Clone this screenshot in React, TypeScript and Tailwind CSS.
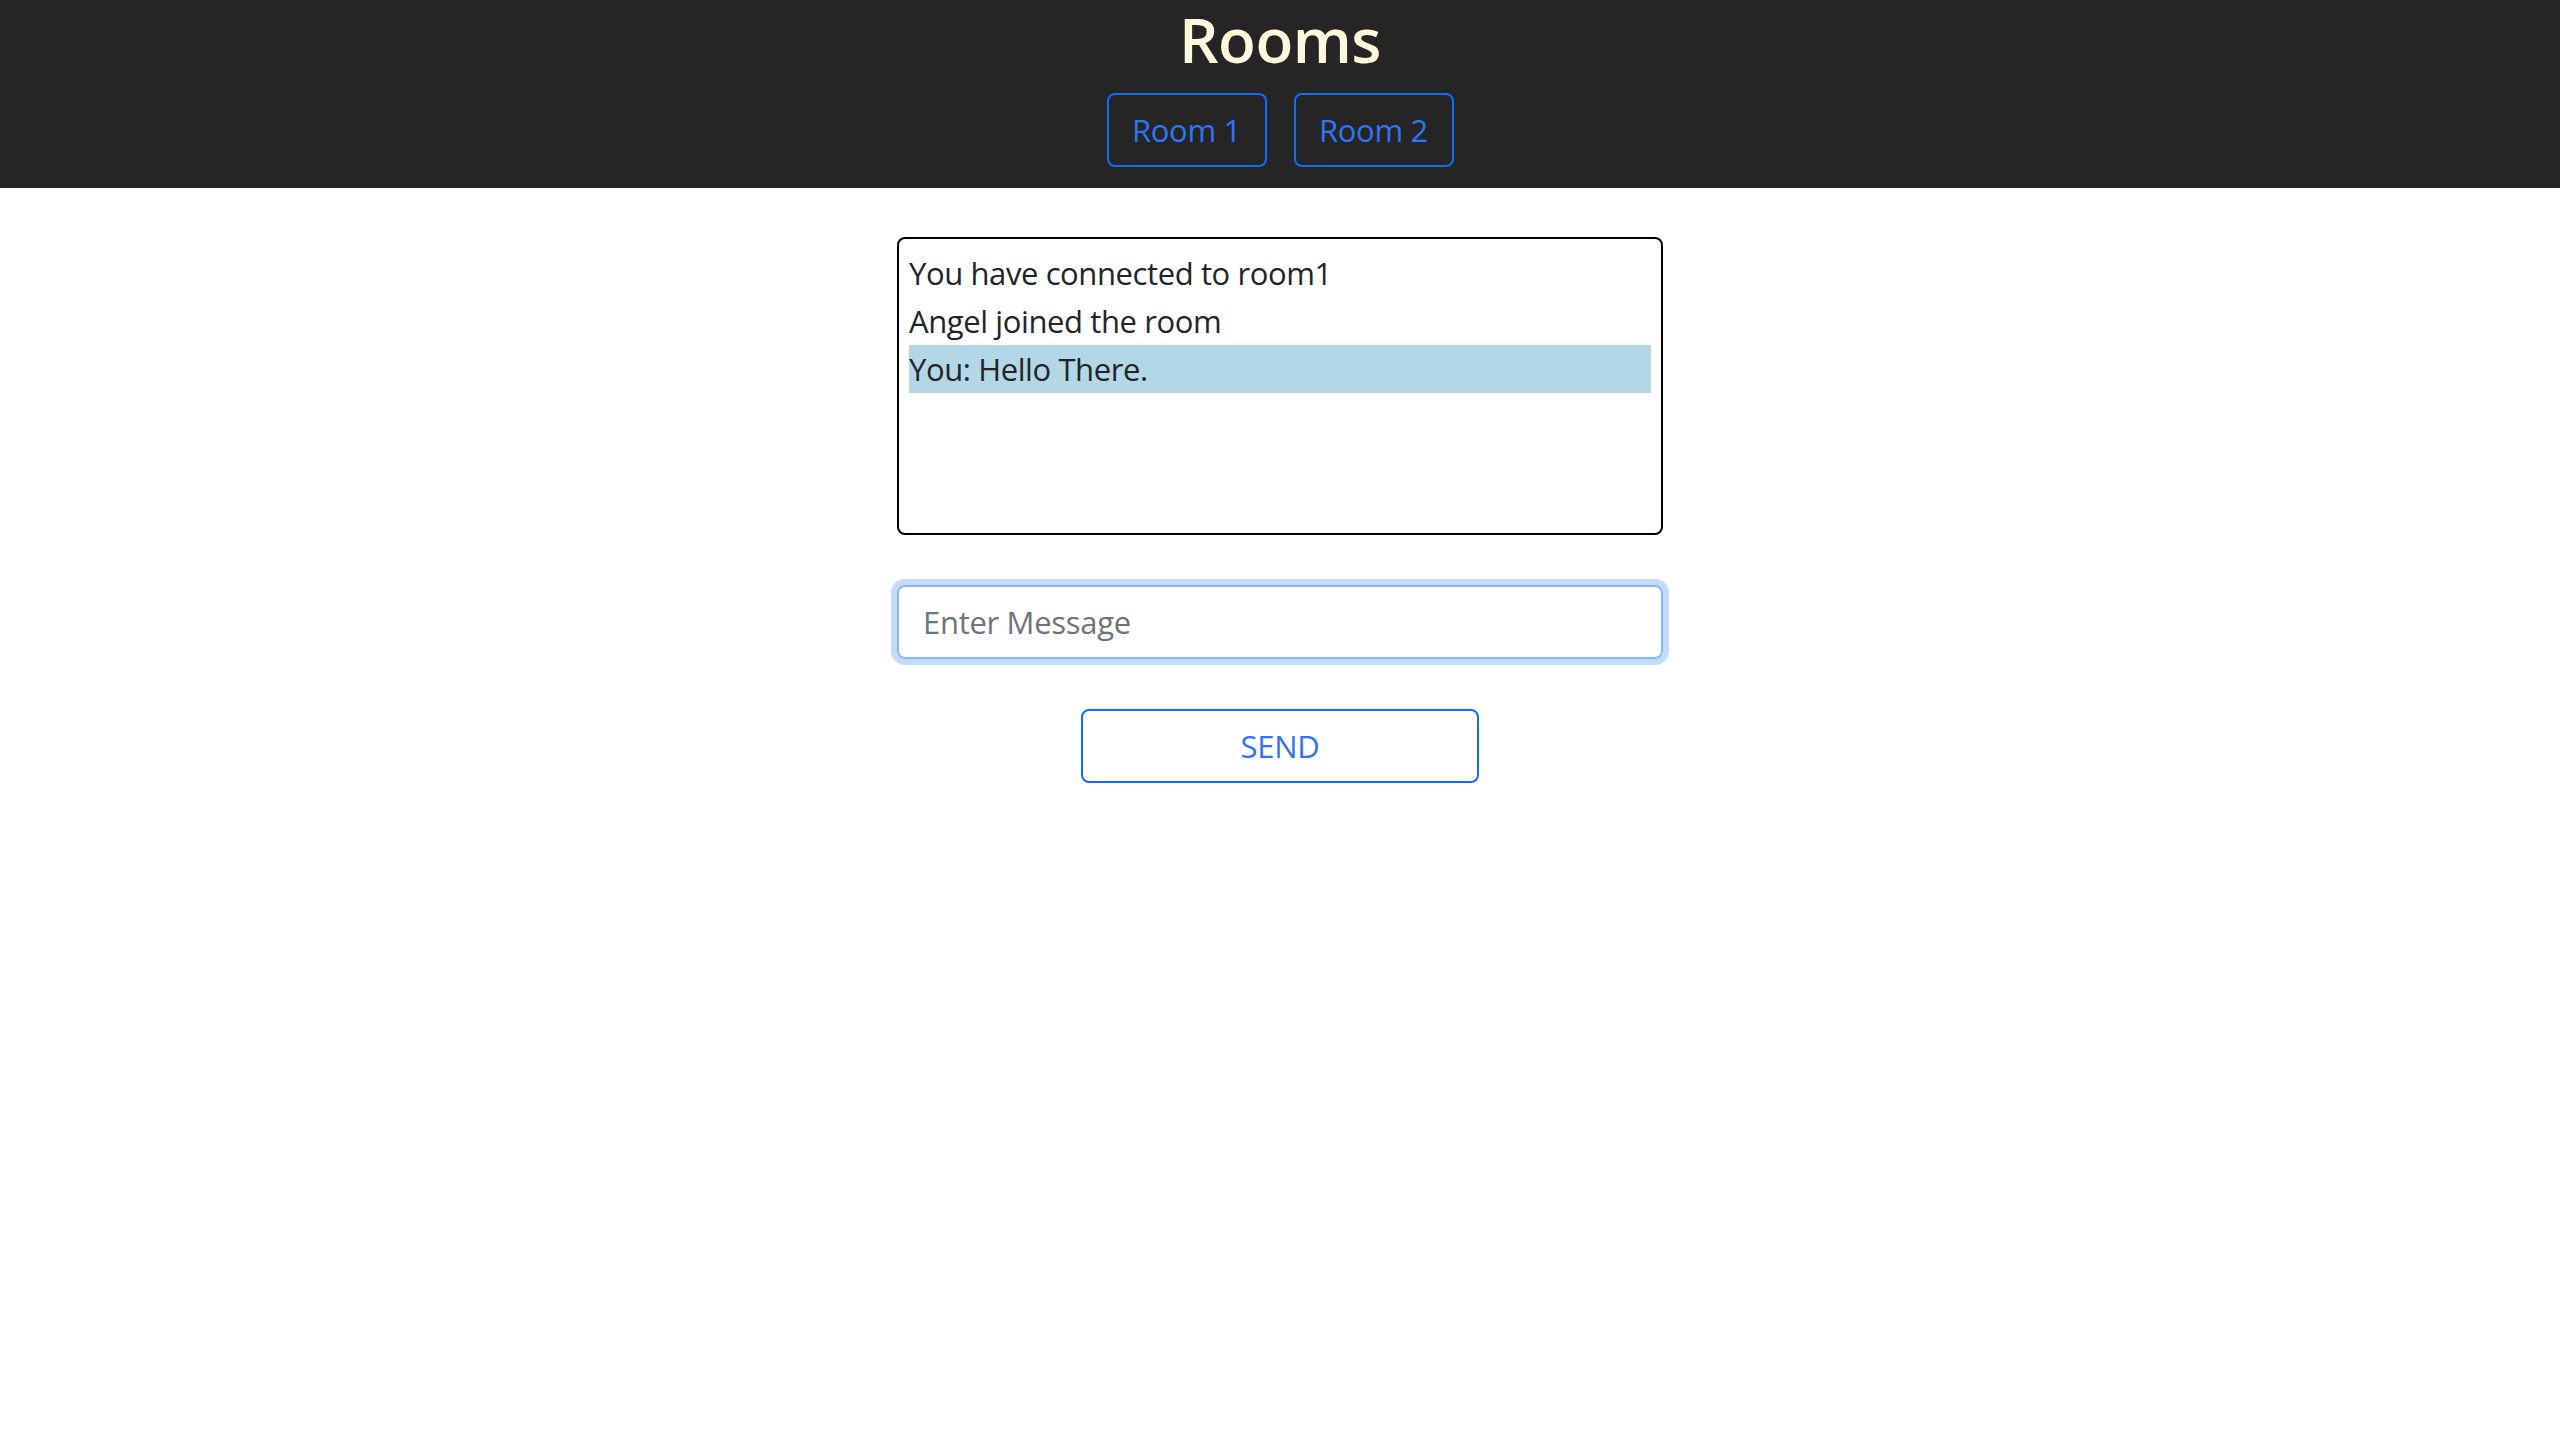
import { useState } from "react";

const messages = [
  { text: "You have connected to room1", mine: false },
  { text: "Angel joined the room", mine: false },
  { text: "You: Hello There.", mine: true }
];

export default function App() {
  const [room, setRoom] = useState("room1");
  const [draft, setDraft] = useState("");

  return (
    <div className="min-h-screen bg-white font-['Open_Sans',sans-serif] text-[#212529]">
      <header className="flex flex-col items-center bg-[#252525] pt-[1px] pb-[21px]">
        <h1 className="m-0 text-[62px] font-semibold leading-[77px] tracking-[-0.5px] text-[#fff8dc]">Rooms</h1>
        <div className="mt-[15px] flex gap-[27px]">
          {["Room 1", "Room 2"].map((name, i) => (
            <button
              key={name}
              onClick={() => setRoom(`room${i + 1}`)}
              className="h-[74px] w-[160px] rounded-[8px] border-2 border-[#0d6efd] text-[31px] leading-[48px] tracking-[-0.3px] text-[#2f74f5]"
            >
              {name}
            </button>
          ))}
        </div>
      </header>

      <main className="mx-auto flex w-[766px] flex-col items-center pt-[49px]">
        <div className="h-[298px] w-full rounded-[8px] border-2 border-black p-[10px] text-[31px] leading-[48px] tracking-[-0.4px]">
          {messages.map((m) => (
            <div key={m.text} className={m.mine ? "bg-[#b3d7e6]" : ""}>
              {m.text.replace("room1", room)}
            </div>
          ))}
        </div>

        <input
          value={draft}
          onChange={(e) => setDraft(e.target.value)}
          placeholder="Enter Message"
          className="mt-[50px] h-[74px] w-full rounded-[8px] border-2 border-[#86b7fe] px-[24px] text-[31px] tracking-[-0.3px] outline-none ring-[6px] ring-[#c2dbfe] placeholder:text-[#6c757d]"
        />

        <button className="mt-[50px] h-[74px] w-[398px] rounded-[8px] border-2 border-[#0d6efd] text-[31px] tracking-[-0.3px] text-[#2f74f5]">
          SEND
        </button>
      </main>
    </div>
  );
}
